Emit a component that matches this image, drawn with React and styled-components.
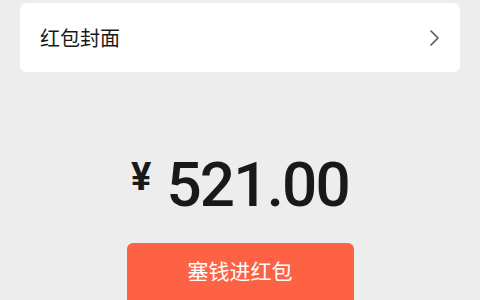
import React from "react";
import styled, { createGlobalStyle } from "styled-components";

const Global = createGlobalStyle`
  html, body { margin: 0; padding: 0; background: #ededed; }
  body { font-family: "Noto Sans CJK SC", "Noto Sans", sans-serif; }
`;

const Page = styled.div`
  width: 480px;
  height: 300px;
  overflow: hidden;
  background: #ededed;
  display: flex;
  flex-direction: column;
  align-items: center;
  padding-top: 3px;
  box-sizing: border-box;
  & > * { flex-shrink: 0; }
`;

const Card = styled.div`
  width: 440px;
  height: 69px;
  background: #fff;
  border-radius: 6px;
  display: flex;
  align-items: center;
  justify-content: space-between;
  padding: 0 20px;
  box-sizing: border-box;
`;

const Label = styled.span`
  font-size: 20px;
  color: #191919;
  line-height: 1;
`;

const Amount = styled.div`
  margin-top: 81px;
  display: flex;
  align-items: baseline;
  color: #191919;
  font-family: Roboto, "Liberation Sans", sans-serif;
  font-weight: 500;
`;

const Yen = styled.span`
  font-size: 38px;
  font-weight: 700;
  margin-right: 15px;
  position: relative;
  top: -16px;
`;

const Value = styled.span`
  font-size: 62px;
  line-height: 64px;
  letter-spacing: -1.8px;
`;

const Button = styled.button`
  margin-top: 26px;
  width: 227px;
  height: 64px;
  border: none;
  border-radius: 6px;
  background: #fd6244;
  color: #fff;
  font-family: "Noto Sans CJK SC", sans-serif;
  font-size: 21px;
  display: flex;
  justify-content: center;
  padding-top: 15px;
  box-sizing: border-box;
  line-height: 1.2;
`;

const Chevron = () => (
  <svg width="12" height="18" viewBox="0 0 12 18" fill="none">
    <path d="M3 2 L10 9 L3 16" stroke="#5c5c5c" strokeWidth="1.7" strokeLinecap="round" strokeLinejoin="round" />
  </svg>
);

export default function App() {
  return (
    <>
      <Global />
      <Page>
        <Card>
          <Label>红包封面</Label>
          <Chevron />
        </Card>
        <Amount>
          <Yen>¥</Yen>
          <Value>521.00</Value>
        </Amount>
        <Button>塞钱进红包</Button>
      </Page>
    </>
  );
}
